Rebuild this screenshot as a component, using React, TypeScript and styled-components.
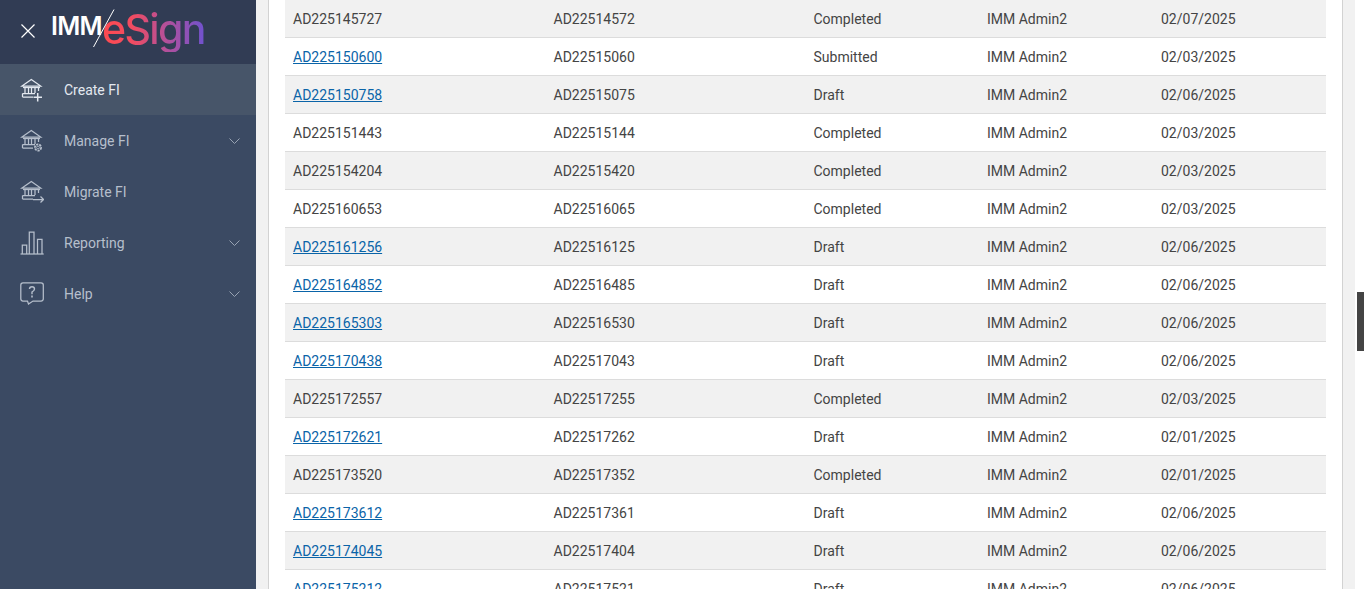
import React from "react"
import styled, { createGlobalStyle } from "styled-components"

const GlobalStyle = createGlobalStyle`
    html, body {
        margin: 0;
        padding: 0;
        height: 100%;
        overflow: hidden;
        font-family: Roboto, "Liberation Sans", sans-serif;
    }
    #root {
        height: 100%;
    }
`

const Page = styled.div`
    display: flex;
    height: 589px;
    overflow: hidden;
    background-color: #fff;
    position: relative;
`

const Aside = styled.aside`
    flex: 0 0 256px;
    display: flex;
    flex-direction: column;
    background-color: #3b4a63;
`

const Header = styled.header`
    height: 64px;
    display: flex;
    align-items: flex-start;
    background-color: #313c54;
    padding: 0 0 0 21px;
    box-sizing: border-box;
`

const CloseButton = styled.svg`
    width: 14px;
    height: 14px;
    margin-top: 24px;
    flex: none;
`

const Logo = styled.div`
    display: flex;
    align-items: flex-start;
    margin-left: 16px;
    position: relative;
`

const LogoImm = styled.span`
    font-family: Inter, sans-serif;
    font-weight: 600;
    font-size: 25px;
    line-height: 24px;
    margin-top: 14px;
    color: #fff;
    letter-spacing: -0.7px;
`

const LogoSign = styled.span`
    font-family: Inter, sans-serif;
    font-weight: 500;
    font-size: 41px;
    line-height: 46px;
    margin: 6px 0 0 0;
    letter-spacing: -1.6px;
    background: linear-gradient(90deg, #ff4a4f 0%, #f04c62 30%, #b4509a 62%, #6f52cf 100%);
    -webkit-background-clip: text;
    background-clip: text;
    color: transparent;
`

const LogoSlash = styled.svg`
    position: absolute;
    left: 41px;
    top: 9px;
    width: 24px;
    height: 40px;
`

const Nav = styled.ul`
    list-style: none;
    margin: 0;
    padding: 0;
`

const NavItem = styled.li<{ $active?: boolean }>`
    height: 51px;
    display: flex;
    align-items: center;
    padding: 0 16px 0 20px;
    box-sizing: border-box;
    font-size: 14px;
    color: ${({ $active }) => ($active ? "#e4e9f0" : "#b6bfcc")};
    background-color: ${({ $active }) => ($active ? "#475569" : "transparent")};
`

const NavIcon = styled.svg`
    width: 24px;
    height: 24px;
    flex: none;
    margin-right: 20px;
    fill: none;
    stroke: currentColor;
    stroke-width: 1.25;
`

const NavLabel = styled.span`
    flex: 1;
`

const Chevron = styled.svg`
    width: 11px;
    height: 6px;
    flex: none;
    fill: none;
    stroke: #98a3b3;
    stroke-width: 1;
`

const Main = styled.main`
    flex: 1;
    display: flex;
    align-items: stretch;
    background-color: #f1f1f1;
    padding: 0 12px;
    min-width: 0;
`

const Card = styled.section`
    flex: 1;
    background-color: #fff;
    border-left: 1px solid #d2d2d2;
    border-right: 1px solid #d2d2d2;
    padding: 0 16px;
    overflow: hidden;
`

const Track = styled.div`
    flex: 0 0 11px;
    background-color: #fff;
`

const Thumb = styled.div`
    position: absolute;
    left: 1357px;
    top: 292px;
    width: 7px;
    height: 59px;
    background-color: #444;
`

const Row = styled.div<{ $striped: boolean }>`
    height: 38px;
    box-sizing: border-box;
    display: grid;
    grid-template-columns: 260.5px 260px 173.5px 174px 1fr;
    align-items: center;
    border-bottom: 1px solid #dcdcdc;
    background-color: ${({ $striped }) => ($striped ? "#f1f1f1" : "#fff")};
    font-size: 14px;
    color: #444;
`

const Cell = styled.div`
    padding-left: 8px;
`

const RowLink = styled.a`
    color: #0a64a8;
    text-decoration: underline;
`

const Bank = () => (
    <>
        <path d="M2 8 L11.3 1.5 L20.7 8 Z" />
        <path d="M3 9.5 H20" />
        <path d="M5 9.5 V15 M8.5 9.5 V15 M11.5 9.5 V15 M15 9.5 V15 M18.5 9.5 V13" />
        <path d="M2.5 15.5 H15 M2.5 19 H13 M2.5 15.5 V19" />
    </>
)

const items = [
    {
        label: "Create FI",
        active: true,
        icon: (
            <>
                <Bank />
                <path d="M17.7 15 V23.5 M13.5 19.3 H22" strokeWidth="1.5" />
            </>
        ),
    },
    {
        label: "Manage FI",
        arrow: true,
        icon: (
            <>
                <Bank />
                <circle cx="18" cy="18.5" r="3.1" strokeWidth="1.8" strokeDasharray="2.2 0.9" />
                <circle cx="18" cy="18.5" r="1.4" strokeWidth="0.8" />
            </>
        ),
    },
    {
        label: "Migrate FI",
        icon: (
            <>
                <Bank />
                <path d="M13 19.5 H23.5 M20.5 16.5 L23.5 19.5 L20.5 22.5" />
            </>
        ),
    },
    {
        label: "Reporting",
        arrow: true,
        icon: (
            <>
                <path d="M0.5 23 H23.7" />
                <path d="M2.3 23 V14 H6.7 V23 M9.3 23 V1 H14 V23 M17.5 23 V8.3 H22 V23" />
            </>
        ),
    },
    {
        label: "Help",
        arrow: true,
        icon: (
            <>
                <path d="M3 0.8 H21 Q23.3 0.8 23.3 3 V16.8 Q23.3 19 21 19 H13 L8.5 22 L7.5 19 H3 Q0.8 19 0.8 16.8 V3 Q0.8 0.8 3 0.8 Z" />
                <path d="M9.5 7 Q9.5 4.7 12 4.7 Q14.5 4.7 14.5 7 Q14.5 8.5 12 10 V12.3" strokeWidth="1.4" />
                <path d="M12 13.6 V15.4" strokeWidth="1.6" />
            </>
        ),
    },
]

const rows = [
    ["AD225145727", "AD22514572", "Completed", "02/07/2025", false],
    ["AD225150600", "AD22515060", "Submitted", "02/03/2025", true],
    ["AD225150758", "AD22515075", "Draft", "02/06/2025", true],
    ["AD225151443", "AD22515144", "Completed", "02/03/2025", false],
    ["AD225154204", "AD22515420", "Completed", "02/03/2025", false],
    ["AD225160653", "AD22516065", "Completed", "02/03/2025", false],
    ["AD225161256", "AD22516125", "Draft", "02/06/2025", true],
    ["AD225164852", "AD22516485", "Draft", "02/06/2025", true],
    ["AD225165303", "AD22516530", "Draft", "02/06/2025", true],
    ["AD225170438", "AD22517043", "Draft", "02/06/2025", true],
    ["AD225172557", "AD22517255", "Completed", "02/03/2025", false],
    ["AD225172621", "AD22517262", "Draft", "02/01/2025", true],
    ["AD225173520", "AD22517352", "Completed", "02/01/2025", false],
    ["AD225173612", "AD22517361", "Draft", "02/06/2025", true],
    ["AD225174045", "AD22517404", "Draft", "02/06/2025", true],
    ["AD225175212", "AD22517521", "Draft", "02/06/2025", true],
] as const

const App: React.FC = () => {
    return (
        <Page>
            <GlobalStyle />
            <Aside>
                <Header>
                    <CloseButton viewBox="0 0 14 14" fill="none" stroke="#fff" strokeWidth="1.2">
                        <path d="M0.5 0.5 L13.5 13.5 M13.5 0.5 L0.5 13.5" />
                    </CloseButton>
                    <Logo>
                        <LogoImm>IMM</LogoImm>
                        <LogoSlash viewBox="0 0 24 40" fill="none" stroke="#fff" strokeWidth="1">
                            <path d="M22 0.5 L1.5 38" />
                        </LogoSlash>
                        <LogoSign>eSign</LogoSign>
                    </Logo>
                </Header>
                <Nav>
                    {items.map((item) => (
                        <NavItem key={item.label} $active={item.active}>
                            <NavIcon viewBox="0 0 24 24">{item.icon}</NavIcon>
                            <NavLabel>{item.label}</NavLabel>
                            {item.arrow && (
                                <Chevron viewBox="0 0 11 6">
                                    <path d="M0.5 0.5 L5.5 5.5 L10.5 0.5" />
                                </Chevron>
                            )}
                        </NavItem>
                    ))}
                </Nav>
            </Aside>
            <Main>
                <Card>
                    {rows.map((row, i) => (
                        <Row key={row[0]} $striped={i % 2 === 0}>
                            <Cell>{row[4] ? <RowLink href="#">{row[0]}</RowLink> : row[0]}</Cell>
                            <Cell>{row[1]}</Cell>
                            <Cell>{row[2]}</Cell>
                            <Cell>IMM Admin2</Cell>
                            <Cell>{row[3]}</Cell>
                        </Row>
                    ))}
                </Card>
            </Main>
            <Track />
            <Thumb />
        </Page>
    )
}

export default App
